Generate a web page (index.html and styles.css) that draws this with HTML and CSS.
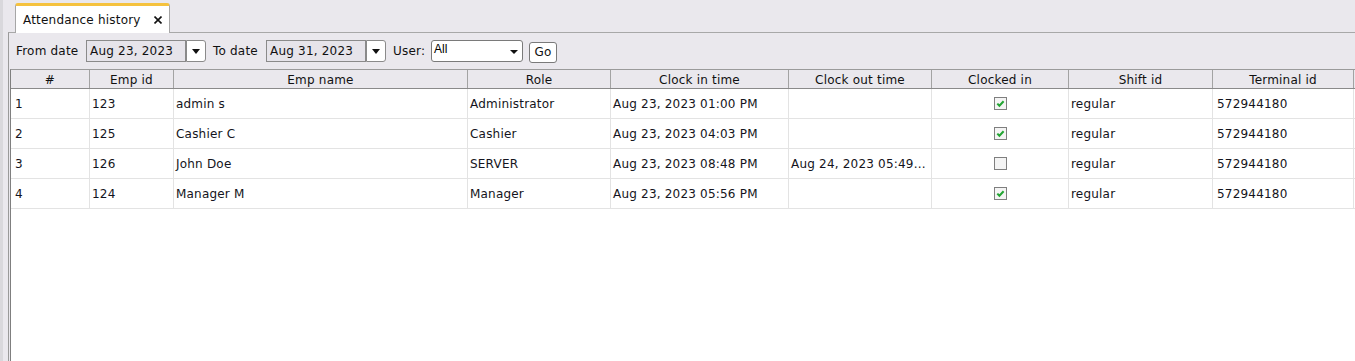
FILE: index.html
```html
<!DOCTYPE html>
<html>
<head>
<meta charset="utf-8">
<title>Attendance history</title>
<link rel="stylesheet" href="styles.css">
</head>
<body>
<div class="app">
  <div class="edge"></div>
  <div class="main">
    <div class="tabbar">
      <div class="tab">
        <span class="tab-title">Attendance history</span>
        <svg class="close" width="8" height="8" viewBox="0 0 8 8"><path d="M0.5 0.5 L7.5 7.5 M7.5 0.5 L0.5 7.5" stroke="#111" stroke-width="1.6" fill="none"/></svg>
      </div>
    </div>
    <div class="panel">
      <div class="toolbar">
        <span class="lbl lbl-from">From date</span>
        <div class="datepick">
          <div class="datefield">Aug 23, 2023</div>
          <div class="dropbtn"><svg width="8" height="5" viewBox="0 0 8 5"><path d="M0 0 H8 L4 5 Z" fill="#111"/></svg></div>
        </div>
        <span class="lbl lbl-to">To date</span>
        <div class="datepick">
          <div class="datefield">Aug 31, 2023</div>
          <div class="dropbtn"><svg width="8" height="5" viewBox="0 0 8 5"><path d="M0 0 H8 L4 5 Z" fill="#111"/></svg></div>
        </div>
        <span class="lbl lbl-user">User:</span>
        <div class="combo">
          <span class="combo-value">All</span>
          <svg class="combo-arrow" width="8" height="4" viewBox="0 0 8 4"><path d="M0 0 H8 L4 4 Z" fill="#111"/></svg>
        </div>
        <button class="go">Go</button>
      </div>
      <div class="grid">
        <div class="row head">
          <div class="cell">#</div>
          <div class="cell">Emp id</div>
          <div class="cell">Emp name</div>
          <div class="cell">Role</div>
          <div class="cell">Clock in time</div>
          <div class="cell">Clock out time</div>
          <div class="cell">Clocked in</div>
          <div class="cell">Shift id</div>
          <div class="cell">Terminal id</div>
        </div>
        <div class="row">
          <div class="cell first">1</div>
          <div class="cell">123</div>
          <div class="cell">admin s</div>
          <div class="cell">Administrator</div>
          <div class="cell">Aug 23, 2023 01:00 PM</div>
          <div class="cell"></div>
          <div class="cell center"><svg class="chk" width="13" height="13" viewBox="0 0 13 13"><rect x="0.5" y="0.5" width="12" height="12" fill="#f4f4f4" stroke="#7f7f7f"/><path d="M3.3 6.6 L5.4 8.7 L9.6 4.2" stroke="#22a532" stroke-width="2" fill="none"/></svg></div>
          <div class="cell">regular</div>
          <div class="cell term">572944180</div>
        </div>
        <div class="row">
          <div class="cell first">2</div>
          <div class="cell">125</div>
          <div class="cell">Cashier C</div>
          <div class="cell">Cashier</div>
          <div class="cell">Aug 23, 2023 04:03 PM</div>
          <div class="cell"></div>
          <div class="cell center"><svg class="chk" width="13" height="13" viewBox="0 0 13 13"><rect x="0.5" y="0.5" width="12" height="12" fill="#f4f4f4" stroke="#7f7f7f"/><path d="M3.3 6.6 L5.4 8.7 L9.6 4.2" stroke="#22a532" stroke-width="2" fill="none"/></svg></div>
          <div class="cell">regular</div>
          <div class="cell term">572944180</div>
        </div>
        <div class="row">
          <div class="cell first">3</div>
          <div class="cell">126</div>
          <div class="cell">John Doe</div>
          <div class="cell">SERVER</div>
          <div class="cell">Aug 23, 2023 08:48 PM</div>
          <div class="cell">Aug 24, 2023 05:49...</div>
          <div class="cell center"><svg class="chk" width="13" height="13" viewBox="0 0 13 13"><rect x="0.5" y="0.5" width="12" height="12" fill="#f4f4f4" stroke="#7f7f7f"/></svg></div>
          <div class="cell">regular</div>
          <div class="cell term">572944180</div>
        </div>
        <div class="row">
          <div class="cell first">4</div>
          <div class="cell">124</div>
          <div class="cell">Manager M</div>
          <div class="cell">Manager</div>
          <div class="cell">Aug 23, 2023 05:56 PM</div>
          <div class="cell"></div>
          <div class="cell center"><svg class="chk" width="13" height="13" viewBox="0 0 13 13"><rect x="0.5" y="0.5" width="12" height="12" fill="#f4f4f4" stroke="#7f7f7f"/><path d="M3.3 6.6 L5.4 8.7 L9.6 4.2" stroke="#22a532" stroke-width="2" fill="none"/></svg></div>
          <div class="cell">regular</div>
          <div class="cell term">572944180</div>
        </div>
      </div>
    </div>
  </div>
</div>
</body>
</html>
```

FILE: styles.css
```css
* { box-sizing: border-box; }

html, body {
  margin: 0;
  padding: 0;
  height: 100%;
}

body {
  background: #eae8ed;
  font-family: "DejaVu Sans", sans-serif;
  font-size: 12px;
  letter-spacing: 0.2px;
  color: #151515;
  overflow: hidden;
}

.app {
  display: flex;
  height: 361px;
}

.edge {
  width: 3px;
  background: #d9d8dc;
}

.main {
  flex: 1;
  display: flex;
  flex-direction: column;
  padding-left: 5px;
  min-width: 0;
}

.tabbar {
  display: flex;
  height: 32px;
  padding-left: 7px;
}

.tab {
  position: relative;
  z-index: 1;
  margin-top: 3px;
  height: 30px;
  display: flex;
  align-items: center;
  gap: 13px;
  padding: 0 7px 0 7px;
  background: #ffffff;
  border-top: 3px solid #f5c23e;
  border-left: 1px solid #a6a6a6;
  border-right: 1px solid #a6a6a6;
  border-radius: 3px 3px 0 0;
  color: #111;
}

.tab-title {
  line-height: 14px;
}

.close {
  display: block;
}

.panel {
  flex: 1;
  display: flex;
  flex-direction: column;
  border-top: 1px solid #a8a8a8;
  border-left: 1px solid #9a9a9a;
  min-height: 0;
}

.toolbar {
  height: 36px;
  display: flex;
  align-items: center;
  padding-left: 7px;
  color: #111;
}

.lbl-from { width: 70px; }
.lbl-to { margin-left: 7px; width: 53px; }
.lbl-user { margin-left: 7px; width: 38px; }

.datepick {
  display: flex;
  height: 22px;
}

.datefield {
  width: 100px;
  height: 22px;
  border: 1px solid #8a8a8a;
  background: #e6e4ea;
  padding-left: 3px;
  line-height: 20px;
  color: #111;
}

.dropbtn {
  width: 20px;
  height: 22px;
  border: 1px solid #8a8a8a;
  border-radius: 0 3px 3px 0;
  background: #ffffff;
  display: flex;
  align-items: center;
  justify-content: center;
}

.combo {
  width: 92px;
  height: 22px;
  border: 1px solid #7a7a7a;
  border-radius: 3px;
  background: #ffffff;
  display: flex;
  align-items: flex-start;
  justify-content: space-between;
  padding: 1px 4px 0 2px;
}

.combo-value {
  font-family: "Liberation Sans", Arial, sans-serif;
  font-size: 12px;
  letter-spacing: 0;
  line-height: 14px;
  color: #000;
}

.combo-arrow {
  align-self: center;
}

.go {
  margin-left: 6px;
  margin-top: 2px;
  width: 28px;
  height: 21px;
  padding: 0;
  border: 1px solid #7a7a7a;
  border-radius: 3px;
  background: #ffffff;
  font-family: "DejaVu Sans", sans-serif;
  font-size: 12px;
  letter-spacing: 0.2px;
  color: #111;
}

.grid {
  flex: 1;
  margin-left: 1px;
  background: #ffffff;
  border-top: 1px solid #9a9a9a;
  border-left: 1px solid #7f7f7f;
  --cols: 79px 84px 294px 143px 178px 143px 137px 144px 141px;
}

.row {
  display: grid;
  grid-template-columns: var(--cols);
  height: 30px;
  border-bottom: 1px solid #e3e3e3;
}

.row .cell {
  border-right: 1px solid #e3e3e3;
  display: flex;
  align-items: center;
  padding-left: 2px;
  white-space: nowrap;
  overflow: hidden;
  color: #141420;
}

.row .cell.first { padding-left: 4px; }
.row .cell.term { padding-left: 4px; }

.row .cell.center {
  justify-content: center;
  padding-left: 0;
}

.row.head {
  height: 19px;
  background: #eae8ed;
  border-bottom: 1px solid #8a8a8a;
}

.row.head .cell {
  justify-content: center;
  padding-left: 0;
  padding-top: 1px;
  border-right: 1px solid #a3a3a3;
  color: #111;
}

.chk { display: block; }
```
